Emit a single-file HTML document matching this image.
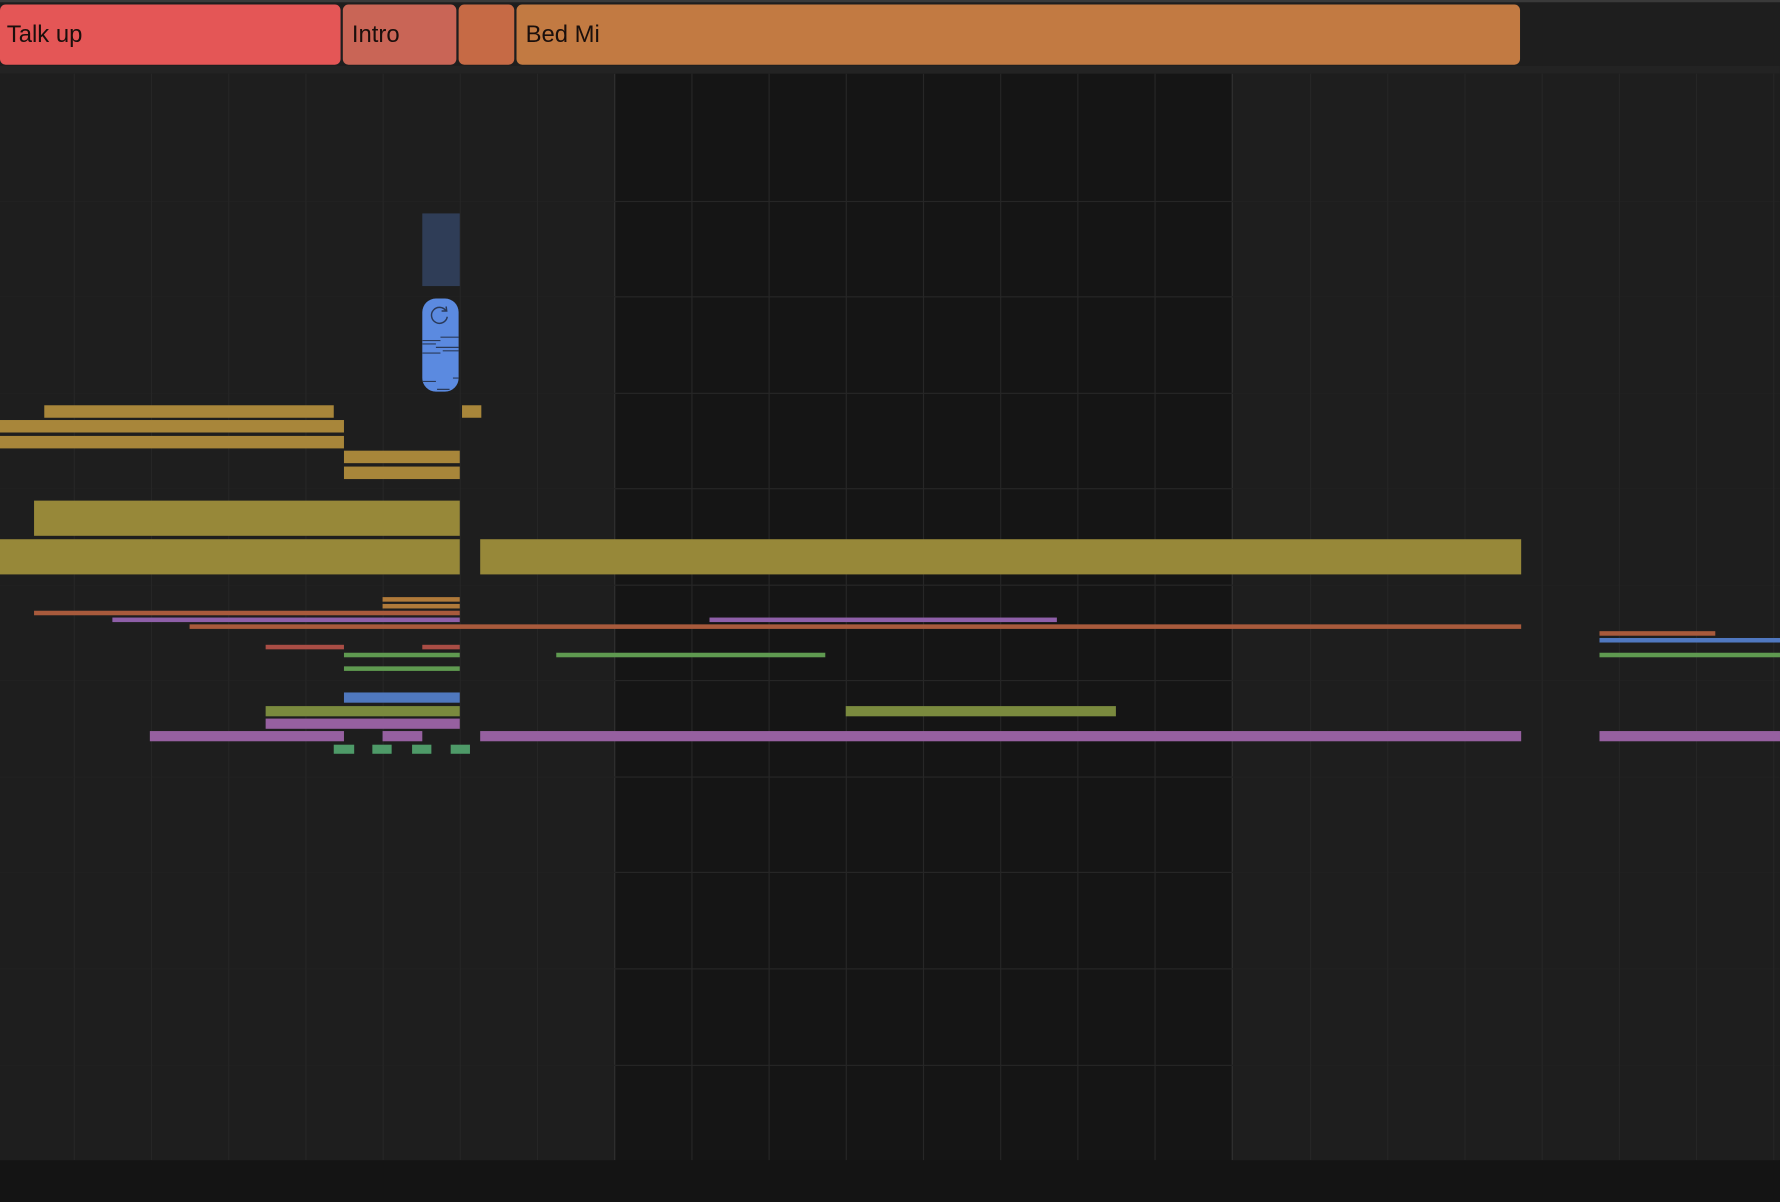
<!DOCTYPE html>
<html><head><style>
html,body{margin:0;padding:0;background:#1e1e1e;overflow:hidden;width:1780px;height:1202px}
#w{position:absolute;left:0;top:0;width:1568px;height:1059px;transform:scale(1.13520);transform-origin:0 0;background:#1e1e1e}
.a{position:absolute}
.blk{position:absolute;top:4px;height:53px;border-radius:5px;font-family:"Liberation Sans",sans-serif;font-size:21px;color:#1a0f0c;line-height:53px;padding-left:6px;box-sizing:border-box}
.v{position:absolute;top:65px;width:1px;height:957px;background:#262626}
.h{position:absolute;left:541px;width:545px;height:1px;background:#262626}
.hl{position:absolute;left:0;width:1568px;height:1px;background:#212121}
</style></head><body><div id="w">
<div class="a" style="left:0;top:0;width:1568px;height:2px;background:#3a3a3a"></div>
<div class="a" style="left:0;top:58px;width:1568px;height:7px;background:#232323"></div>
<div class="blk" style="left:0;width:300px;background:#e45656">Talk up</div>
<div class="blk" style="left:302px;width:100px;background:#c96556;padding-left:8px">Intro</div>
<div class="blk" style="left:404px;width:49px;background:#c66a45"></div>
<div class="blk" style="left:455px;width:884px;background:#c27a42;padding-left:8px">Bed Mi</div>
<div class="a" style="left:0;top:65px;width:1568px;height:957px;background:#1e1e1e"></div>
<div class="a" style="left:541px;top:65px;width:545px;height:957px;background:#151515;border-left:1px solid #333;border-right:1px solid #333;box-sizing:border-box"></div>
<div class="hl" style="top:177px"></div><div class="hl" style="top:261px"></div><div class="hl" style="top:346px"></div><div class="hl" style="top:430px"></div><div class="hl" style="top:515px"></div><div class="hl" style="top:599px"></div><div class="hl" style="top:684px"></div><div class="hl" style="top:768px"></div><div class="hl" style="top:853px"></div><div class="hl" style="top:938px"></div>
<div class="h" style="top:177px"></div><div class="h" style="top:261px"></div><div class="h" style="top:346px"></div><div class="h" style="top:430px"></div><div class="h" style="top:515px"></div><div class="h" style="top:599px"></div><div class="h" style="top:684px"></div><div class="h" style="top:768px"></div><div class="h" style="top:853px"></div><div class="h" style="top:938px"></div>
<div class="v" style="left:65px"></div><div class="v" style="left:133px"></div><div class="v" style="left:201px"></div><div class="v" style="left:269px"></div><div class="v" style="left:337px"></div><div class="v" style="left:405px"></div><div class="v" style="left:473px"></div><div class="v" style="left:609px;background:#272727"></div><div class="v" style="left:677px;background:#272727"></div><div class="v" style="left:745px;background:#272727"></div><div class="v" style="left:813px;background:#272727"></div><div class="v" style="left:881px;background:#272727"></div><div class="v" style="left:949px;background:#272727"></div><div class="v" style="left:1017px;background:#272727"></div><div class="v" style="left:1154px"></div><div class="v" style="left:1222px"></div><div class="v" style="left:1290px"></div><div class="v" style="left:1358px"></div><div class="v" style="left:1426px"></div><div class="v" style="left:1494px"></div><div class="v" style="left:1562px"></div>
<div class="a" style="left:0;top:1022px;width:1568px;height:37px;background:#141414"></div>
<div class="a" style="left:372px;top:188px;width:33px;height:64px;background:#2f3d57"></div>
<div class="a" style="left:372px;top:263px;width:32px;height:82px;background:#5b8ae0;border-radius:12px;overflow:hidden">
<svg width="32" height="82" style="position:absolute;left:0;top:0"><path d="M21 11 A7 7 0 1 0 22 16" fill="none" stroke="#2a3a5a" stroke-width="1.3"/><path d="M17 11 L21.5 11 L21 7" fill="none" stroke="#2a3a5a" stroke-width="1.3"/>
<g stroke="#2a3a5a" stroke-width="1"><line x1="0" y1="37" x2="16" y2="37"/><line x1="16" y1="34" x2="32" y2="34"/><line x1="0" y1="40" x2="12" y2="40"/><line x1="12" y1="43" x2="32" y2="43"/><line x1="18" y1="46" x2="32" y2="46"/><line x1="0" y1="48" x2="16" y2="48"/><line x1="27" y1="70" x2="32" y2="70"/><line x1="0" y1="73" x2="12" y2="73"/><line x1="13" y1="80" x2="24" y2="80"/></g></svg></div>
<div class="a" style="left:39px;top:357px;width:255px;height:11px;background:#a8863a"></div>
<div class="a" style="left:407px;top:357px;width:17px;height:11px;background:#a8863a"></div>
<div class="a" style="left:0;top:370px;width:303px;height:11px;background:#a8863a"></div>
<div class="a" style="left:0;top:384px;width:303px;height:11px;background:#a8863a"></div>
<div class="a" style="left:303px;top:397px;width:102px;height:11px;background:#a8863a"></div>
<div class="a" style="left:303px;top:411px;width:102px;height:11px;background:#a8863a"></div>
<div class="a" style="left:30px;top:441px;width:375px;height:31px;background:#978839"></div>
<div class="a" style="left:0;top:475px;width:405px;height:31px;background:#978839"></div>
<div class="a" style="left:423px;top:475px;width:917px;height:31px;background:#978839"></div>
<div class="a" style="left:337px;top:526px;width:68px;height:4px;background:#b07a3a"></div>
<div class="a" style="left:337px;top:532px;width:68px;height:4px;background:#b07a3a"></div>
<div class="a" style="left:30px;top:538px;width:375px;height:4px;background:#a85a3c"></div>
<div class="a" style="left:99px;top:544px;width:306px;height:4px;background:#8e5fa8"></div>
<div class="a" style="left:625px;top:544px;width:306px;height:4px;background:#8e5fa8"></div>
<div class="a" style="left:167px;top:550px;width:1173px;height:4px;background:#a85a3c"></div>
<div class="a" style="left:234px;top:568px;width:69px;height:4px;background:#a94d45"></div>
<div class="a" style="left:372px;top:568px;width:33px;height:4px;background:#a94d45"></div>
<div class="a" style="left:303px;top:575px;width:102px;height:4px;background:#5f9a50"></div>
<div class="a" style="left:490px;top:575px;width:237px;height:4px;background:#5f9a50"></div>
<div class="a" style="left:303px;top:587px;width:102px;height:4px;background:#5f9a50"></div>
<div class="a" style="left:1409px;top:556px;width:102px;height:4px;background:#a85a3c"></div>
<div class="a" style="left:1409px;top:562px;width:159px;height:4px;background:#5078c0"></div>
<div class="a" style="left:1409px;top:575px;width:159px;height:4px;background:#5f9a50"></div>
<div class="a" style="left:303px;top:610px;width:102px;height:9px;background:#4f78be"></div>
<div class="a" style="left:234px;top:622px;width:171px;height:9px;background:#7a8a3e"></div>
<div class="a" style="left:745px;top:622px;width:238px;height:9px;background:#7a8a3e"></div>
<div class="a" style="left:234px;top:633px;width:171px;height:9px;background:#9660a0"></div>
<div class="a" style="left:132px;top:644px;width:171px;height:9px;background:#9660a0"></div>
<div class="a" style="left:337px;top:644px;width:35px;height:9px;background:#9660a0"></div>
<div class="a" style="left:423px;top:644px;width:917px;height:9px;background:#9660a0"></div>
<div class="a" style="left:1409px;top:644px;width:159px;height:9px;background:#9660a0"></div>
<div class="a" style="left:294px;top:656px;width:18px;height:8px;background:#4e9a68"></div>
<div class="a" style="left:328px;top:656px;width:17px;height:8px;background:#4e9a68"></div>
<div class="a" style="left:363px;top:656px;width:17px;height:8px;background:#4e9a68"></div>
<div class="a" style="left:397px;top:656px;width:17px;height:8px;background:#4e9a68"></div>
</div></body></html>
